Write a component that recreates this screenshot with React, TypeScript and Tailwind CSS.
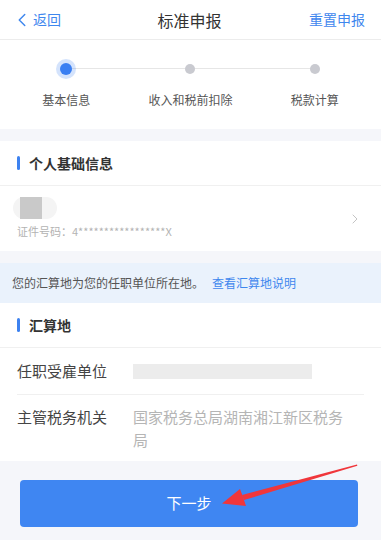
import { ChevronLeft, ChevronRight } from 'lucide-react'

const FONT = '"Noto Sans CJK SC", "Noto Sans", sans-serif'

const steps = ['基本信息', '收入和税前扣除', '税款计算']

const SectionTitle = ({ title }: { title: string }) => (
  <div className="flex h-[45px] items-center gap-[9px] border-b border-[#f0f0f0] px-[17px]">
    <span className="h-[14px] w-[3px] rounded-full bg-[#3d82f0]" />
    <span className="text-[14px] font-bold text-[#333]">{title}</span>
  </div>
)

const PointerArrow = () => (
  <svg
    className="pointer-events-none absolute left-0 top-0"
    width="381"
    height="540"
    viewBox="0 0 381 540"
    aria-hidden="true"
  >
    <polygon points="357,464.5 357.4,465.8 244,500 242,495" fill="#f0363b" />
    <polygon points="222,503.5 240,489 243,497 246,506" fill="#f0363b" />
  </svg>
)

export default function App() {
  return (
    <div
      className="relative flex h-[540px] w-[381px] flex-col overflow-hidden bg-[#f5f6fa]"
      style={{ fontFamily: FONT }}
    >
      {/* header */}
      <div className="grid h-[40px] grid-cols-3 items-center border-b border-[#ececec] bg-white pl-[14px] pr-[16px]">
        <div className="flex items-center text-[14px] text-[#3f87ee]">
          <ChevronLeft size={22} strokeWidth={1.6} className="-ml-[3px]" />
          <span>返回</span>
        </div>
        <span className="text-center text-[16px] text-[#333]">标准申报</span>
        <span className="text-right text-[14px] text-[#3f87ee]">重置申报</span>
      </div>

      {/* stepper */}
      <div className="relative bg-white px-1 pb-[20px] pt-[22px]">
        <div className="absolute left-[66px] right-[68px] top-[28px] h-px bg-[#e6e6e6]" />
        <div className="relative grid grid-cols-3">
          {steps.map((s, i) => (
            <div key={s} className="flex flex-col items-center">
              <div className="flex h-[14px] items-center justify-center">
                {i === 0 ? (
                  <span className="h-[12px] w-[12px] rounded-full bg-[#3a7ff2] shadow-[0_0_0_4px_rgba(58,127,242,0.22)]" />
                ) : (
                  <span className="h-[10px] w-[10px] rounded-full bg-[#c9cad0]" />
                )}
              </div>
              <span className="mt-[15px] text-[12px] text-[#555]">{s}</span>
            </div>
          ))}
        </div>
      </div>

      {/* personal info */}
      <div className="mt-[12px] bg-white">
        <SectionTitle title="个人基础信息" />
        <div className="flex h-[65px] items-center justify-between pl-[17px] pr-[18px]">
          <div className="flex flex-col">
            <div className="-ml-[4px] flex h-[22px] w-[44px] items-center rounded-full bg-[#f4f4f4] pl-[7px]">
              <span className="h-[22px] w-[22px] bg-[#c9c9c9]" />
            </div>
            <span className="mt-[4px] text-[11px] text-[#b3b3b3]">证件号码：4*****************X</span>
          </div>
          <ChevronRight size={16} strokeWidth={1.5} className="text-[#c4c4c4]" />
        </div>
      </div>

      {/* notice */}
      <div className="mt-[12px] flex h-[40px] items-center bg-[#eaf2fc] px-[12px] text-[12px] text-[#555]">
        <span>您的汇算地为您的任职单位所在地。</span>
        <span className="ml-[8px] text-[#3f87ee]">查看汇算地说明</span>
      </div>

      {/* tax place */}
      <div className="bg-white">
        <SectionTitle title="汇算地" />
        <div className="mx-[17px] flex h-[47px] items-center border-b border-[#f0f0f0]">
          <span className="w-[116px] text-[15px] text-[#444]">任职受雇单位</span>
          <span className="h-[15px] w-[179px] bg-[#ececec]" />
        </div>
        <div className="flex px-[17px] pb-[10px] pt-[10px]">
          <span className="w-[116px] shrink-0 text-[15px] leading-[23px] text-[#444]">主管税务机关</span>
          <span className="max-w-[216px] text-[15px] leading-[23px] text-[#b5b5b5]">
            国家税务总局湖南湘江新区税务局
          </span>
        </div>
      </div>

      {/* bottom */}
      <div className="flex flex-1 flex-col px-[20px] pt-[19px]">
        <button className="flex h-[47px] w-[338px] items-center justify-center rounded-[4px] bg-[#3f86f2] text-[15px] text-white">
          下一步
        </button>
      </div>

      <PointerArrow />
    </div>
  )
}
